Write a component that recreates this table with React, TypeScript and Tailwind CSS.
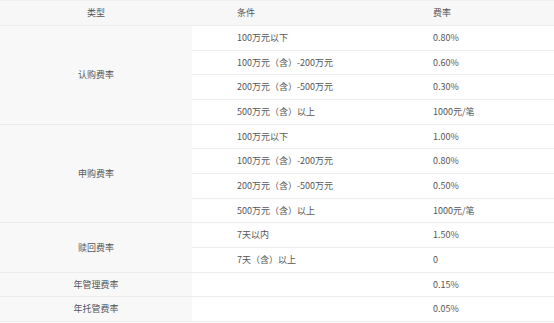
import React from "react";

type Group = { type: string; rows: [string, string][] };

const GROUPS: Group[] = [
  {
    type: "认购费率",
    rows: [
      ["100万元以下", "0.80%"],
      ["100万元（含）-200万元", "0.60%"],
      ["200万元（含）-500万元", "0.30%"],
      ["500万元（含）以上", "1000元/笔"],
    ],
  },
  {
    type: "申购费率",
    rows: [
      ["100万元以下", "1.00%"],
      ["100万元（含）-200万元", "0.80%"],
      ["200万元（含）-500万元", "0.50%"],
      ["500万元（含）以上", "1000元/笔"],
    ],
  },
  {
    type: "赎回费率",
    rows: [
      ["7天以内", "1.50%"],
      ["7天（含）以上", "0"],
    ],
  },
  { type: "年管理费率", rows: [["", "0.15%"]] },
  { type: "年托管费率", rows: [["", "0.05%"]] },
];

export default function App() {
  return (
    <div className="w-[554px] h-[323px] bg-white overflow-hidden font-['Noto_Sans_CJK_SC','Noto_Sans',sans-serif] text-[9px] text-[#555]">
      <table className="w-full border-collapse table-fixed border-t border-[#f0f0f0]">
        <colgroup>
          <col className="w-[192px]" />
          <col className="w-[196px]" />
          <col />
        </colgroup>
        <thead>
          <tr className="h-[25px] bg-[#f7f7f7] border-b border-[#ececec]">
            <th className="font-normal text-center">类型</th>
            <th className="font-normal text-left pl-[45px]">条件</th>
            <th className="font-normal text-left pl-[45px]">费率</th>
          </tr>
        </thead>
        <tbody>
          {GROUPS.map((g) =>
            g.rows.map(([cond, fee], i) => (
              <tr key={g.type + i} className="h-[24.67px] border-b border-[#ececec]">
                {i === 0 && (
                  <td rowSpan={g.rows.length} className="bg-[#f8f8f8] text-center border-b border-[#ececec]">
                    {g.type}
                  </td>
                )}
                <td className="pl-[45px]">{cond}</td>
                <td className="pl-[45px]">{fee}</td>
              </tr>
            ))
          )}
        </tbody>
      </table>
    </div>
  );
}
